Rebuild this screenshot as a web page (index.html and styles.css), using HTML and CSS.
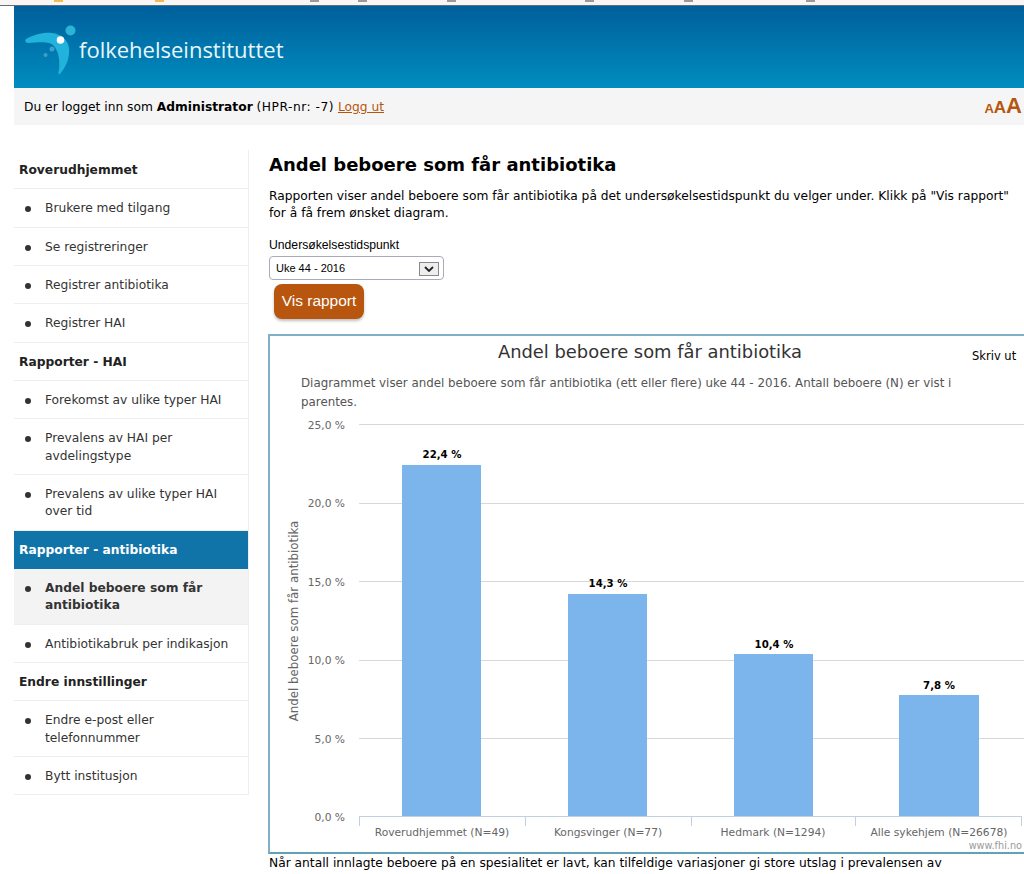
FILE: index.html
```html
<!DOCTYPE html>
<html lang="en">
<head>
    <meta charset="UTF-8">
    <meta name="viewport" content="width=device-width, initial-scale=1.0">
    <title>Andel beboere som får antibiotika</title>
    <link rel="stylesheet" href="styles.css">
</head>
<body>
    <div class="topstrip">
        <span class="stub orange" style="left:54px"></span>
        <span class="stub orange" style="left:155px"></span>
        <span class="stub grey" style="left:310px"></span>
        <span class="stub grey" style="left:358px"></span>
        <span class="stub grey" style="left:447px"></span>
        <span class="stub grey" style="left:585px"></span>
        <span class="stub grey" style="left:684px"></span>
        <span class="stub grey" style="left:806px"></span>
    </div>

    <div class="page">
        <div class="banner">
            <svg class="logo" width="60" height="52" viewBox="24 24 60 52">
                <path d="M26 39 C33 35 44 32 52 33 C61 34 68 40 69 48 C70 58 66 67 60 74 C58 75 58 73 59 70 C60 62 59 52 54 46 C50 41 40 42 28 43 C25 43 25 40 26 39 Z" fill="#21b3dc"/>
                <circle cx="70.500" cy="30.500" r="5" fill="#2bb3d8"/>
                <circle cx="60.500" cy="40" r="3.800" fill="#ffffff"/>
                <circle cx="52" cy="49" r="2.500" fill="#3f9fcb"/>
                <circle cx="45.500" cy="55" r="2" fill="#3f9fcb"/>
            </svg>
            <span class="logo-text">folkehelseinstituttet</span>
        </div>

        <div class="userbar">
            <div>Du er logget inn som <strong>Administrator</strong> <span class="hpr">(HPR-nr: -7)</span> <a href="#">Logg ut</a></div>
            <div class="textsize"><span class="a1">A</span><span class="a2">A</span><span class="a3">A</span></div>
        </div>

        <div class="columns">
            <nav class="sidebar">
                <div class="nav-head">Roverudhjemmet</div>
                <div class="nav-item">Brukere med tilgang</div>
                <div class="nav-item">Se registreringer</div>
                <div class="nav-item">Registrer antibiotika</div>
                <div class="nav-item">Registrer HAI</div>
                <div class="nav-head">Rapporter - HAI</div>
                <div class="nav-item">Forekomst av ulike typer HAI</div>
                <div class="nav-item">Prevalens av HAI per avdelingstype</div>
                <div class="nav-item">Prevalens av ulike typer HAI over tid</div>
                <div class="nav-head current">Rapporter - antibiotika</div>
                <div class="nav-item selected">Andel beboere som får antibiotika</div>
                <div class="nav-item">Antibiotikabruk per indikasjon</div>
                <div class="nav-head">Endre innstillinger</div>
                <div class="nav-item">Endre e-post eller telefonnummer</div>
                <div class="nav-item">Bytt institusjon</div>
            </nav>

            <main class="content">
                <h1>Andel beboere som får antibiotika</h1>
                <p class="intro">Rapporten viser andel beboere som får antibiotika på det undersøkelsestidspunkt du velger under. Klikk på "Vis rapport" for å få frem ønsket diagram.</p>
                <div class="field-label">Undersøkelsestidspunkt</div>
                <div class="select-box">
                    <span>Uke 44 - 2016</span>
                    <span class="select-arrow">
                        <svg width="10" height="6" viewBox="0 0 10 6"><path d="M1 1 L5 5 L9 1" fill="none" stroke="#222" stroke-width="1.800"/></svg>
                    </span>
                </div>
                <button class="report-btn">Vis rapport</button>

                <div class="chart-box">
                    <svg class="chart" width="756" height="516" viewBox="270 336 756 516">
                        <text class="c-title" x="650" y="358" text-anchor="middle">Andel beboere som får antibiotika</text>
                        <text class="c-print" x="972" y="360">Skriv ut</text>
                        <text class="c-sub" x="301" y="387">Diagrammet viser andel beboere som får antibiotika (ett eller flere) uke 44 - 2016. Antall beboere (N) er vist i</text>
                        <text class="c-sub" x="301" y="406">parentes.</text>

                        <g stroke="#d8d8d8" stroke-width="1">
                            <line x1="359" x2="1026" y1="424.500" y2="424.500"/>
                            <line x1="359" x2="1026" y1="503.500" y2="503.500"/>
                            <line x1="359" x2="1026" y1="581.500" y2="581.500"/>
                            <line x1="359" x2="1026" y1="660.500" y2="660.500"/>
                            <line x1="359" x2="1026" y1="738.500" y2="738.500"/>
                        </g>

                        <g class="c-axis" text-anchor="end">
                            <text x="345" y="429">25,0 %</text>
                            <text x="345" y="507">20,0 %</text>
                            <text x="345" y="586">15,0 %</text>
                            <text x="345" y="664">10,0 %</text>
                            <text x="345" y="743">5,0 %</text>
                            <text x="345" y="821">0,0 %</text>
                        </g>
                        <text class="c-ytitle" transform="translate(298 621) rotate(-90)" text-anchor="middle">Andel beboere som får antibiotika</text>

                        <g fill="#7cb5ec">
                            <rect x="402" y="465" width="79" height="351"/>
                            <rect x="568" y="594" width="79" height="222"/>
                            <rect x="734" y="654" width="79" height="162"/>
                            <rect x="899" y="695" width="80" height="121"/>
                        </g>

                        <g class="c-value" text-anchor="middle">
                            <text x="442" y="458">22,4 %</text>
                            <text x="608" y="587">14,3 %</text>
                            <text x="774" y="648">10,4 %</text>
                            <text x="939" y="689">7,8 %</text>
                        </g>

                        <g stroke="#c0d0e0" stroke-width="1">
                            <line x1="359" x2="1022" y1="816.500" y2="816.500"/>
                            <line x1="359.500" x2="359.500" y1="816" y2="826"/>
                            <line x1="525.500" x2="525.500" y1="816" y2="826"/>
                            <line x1="691.500" x2="691.500" y1="816" y2="826"/>
                            <line x1="855.500" x2="855.500" y1="816" y2="826"/>
                            <line x1="1021.500" x2="1021.500" y1="816" y2="826"/>
                        </g>

                        <g class="c-axis" text-anchor="middle">
                            <text x="442" y="836">Roverudhjemmet (N=49)</text>
                            <text x="608" y="836">Kongsvinger (N=77)</text>
                            <text x="773" y="836">Hedmark (N=1294)</text>
                            <text x="939" y="836">Alle sykehjem (N=26678)</text>
                        </g>
                        <text class="c-credit" x="1022" y="849" text-anchor="end">www.fhi.no</text>
                    </svg>
                </div>
                <p class="note">Når antall innlagte beboere på en spesialitet er lavt, kan tilfeldige variasjoner gi store utslag i prevalensen av</p>
            </main>
        </div>
    </div>
</body>
</html>
```

FILE: styles.css
```css
html, body {
    margin: 0;
    overflow-x: hidden;
    background: #fff;
}

body {
    font-family: "DejaVu Sans", Verdana, sans-serif;
    font-size: 12.25px;
    line-height: 17.33px;
    color: #000;
}

.topstrip {
    position: relative;
    height: 5px;
    background: #f8f5f2;
    border-bottom: 1px solid #5b6f80;
    overflow: hidden;
}

.stub {
    position: absolute;
    top: 0;
    width: 9px;
    height: 2px;
}
.stub.orange { background: #eebb55; }
.stub.grey { background: #999; }

.page {
    padding-left: 14px;
}

.banner {
    height: 82px;
    display: flex;
    align-items: center;
    background: linear-gradient(#005f9b, #008dbf);
    padding-left: 10px;
}

.logo {
    flex: none;
    margin-top: 6px;
}

.logo-text {
    font-family: "Open Sans", sans-serif;
    font-size: 22px;
    color: #e8f6fb;
    margin-left: -5px;
    margin-top: 5px;
}

.userbar {
    box-sizing: border-box;
    height: 37px;
    display: flex;
    align-items: center;
    justify-content: space-between;
    background: #f5f5f5;
    padding: 3px 2px 0 10px;
}

.userbar a {
    color: #b5560f;
}

.hpr {
    letter-spacing: 0.5px;
}

.textsize {
    display: flex;
    align-items: baseline;
    color: #b5560f;
    font-family: "Liberation Sans", sans-serif;
    font-weight: bold;
    line-height: 20px;
    margin-top: -2px;
}
.a1 { font-size: 13px; }
.a2 { font-size: 17px; }
.a3 { font-size: 22px; }

.columns {
    display: flex;
    align-items: flex-start;
    margin-top: 25px;
}

.sidebar {
    flex: none;
    width: 234px;
    padding-top: 1px;
    border-right: 1px solid #eee;
}

.nav-head {
    padding: 11px 5px 9px;
    font-weight: bold;
    color: #222;
    border-bottom: 1px solid #eee;
}

.nav-head.current {
    background: #1174a8;
    color: #fff;
    border-bottom-color: #1174a8;
}

.nav-item {
    position: relative;
    padding: 11px 10px 9px 31px;
    color: #333;
    border-bottom: 1px solid #eee;
}

.nav-item::before {
    content: "";
    position: absolute;
    left: 11px;
    top: 17px;
    width: 6px;
    height: 6px;
    border-radius: 50%;
    background: #333;
}

.nav-item.selected {
    background: #f3f3f3;
    font-weight: bold;
}

.content {
    flex: none;
    width: 760px;
    margin-left: 20px;
    padding-top: 1px;
}

h1 {
    margin: 0;
    font-size: 18px;
    line-height: 28px;
    color: #000;
}

.intro {
    margin: 9px 0 0;
    width: 745px;
    line-height: 17px;
}

.field-label {
    margin-top: 15px;
    font-family: "Liberation Sans", sans-serif;
    font-size: 12.200px;
    line-height: 16px;
}

.select-box {
    box-sizing: border-box;
    width: 175px;
    height: 24px;
    margin-top: 3px;
    display: flex;
    align-items: center;
    justify-content: space-between;
    padding: 1px 4px 0 6px;
    border: 1px solid #aab;
    border-radius: 4px;
    font-family: "Liberation Sans", sans-serif;
    font-size: 11px;
}

.select-arrow {
    box-sizing: border-box;
    width: 20px;
    height: 14px;
    display: flex;
    align-items: center;
    justify-content: center;
    background: #eee;
    border: 1px solid #888;
}

.report-btn {
    display: block;
    width: 90px;
    height: 35px;
    margin: 4px 0 0 5px;
    padding: 0 0 2px;
    border: none;
    border-radius: 8px;
    background: #b8560f;
    color: #fff;
    font-family: "Liberation Sans", sans-serif;
    font-size: 15.500px;
    box-shadow: 0 2px 3px rgba(0, 0, 0, 0.25);
}

.chart-box {
    width: 760px;
    height: 516px;
    margin: 15px 0 0 -1px;
    border: 2px solid #7fb0c8;
    border-right: none;
    border-bottom-color: #5fa3b5;
}

.chart {
    display: block;
}

.chart text {
    font-family: "DejaVu Sans", sans-serif;
}

.c-title { font-size: 17.900px; fill: #333; }
.c-print { font-size: 11.500px; fill: #000; }
.c-sub { font-size: 11.850px; fill: #555; }
.c-axis { font-size: 10.700px; fill: #666; }
.c-ytitle { font-size: 11.800px; fill: #666; }
.c-value { font-size: 10.200px; font-weight: bold; fill: #000; }
.c-credit { font-size: 9.700px; fill: #999; }

.note {
    margin: 1px 0 0;
    white-space: nowrap;
}
```
